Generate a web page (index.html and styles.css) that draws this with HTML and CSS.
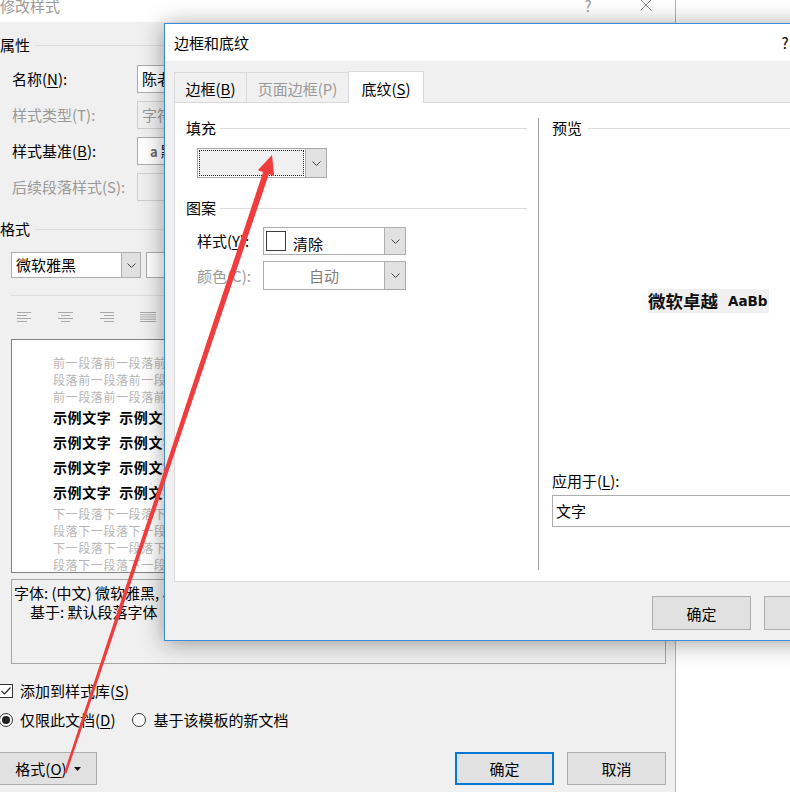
FILE: index.html
```html
<!DOCTYPE html>
<html lang="zh-CN">
<head>
<meta charset="utf-8">
<title>边框和底纹</title>
<link rel="stylesheet" href="styles.css">
</head>
<body>
<div class="screen">
  <div class="back">
    <div class="back-title">
      <span class="back-title-text">修改样式</span>
      <span class="cap-btn help">?</span>
      <span class="cap-btn close"><svg width="12" height="12" viewBox="0 0 12 12"><path d="M0.5 0.5 L11.5 11.5 M11.5 0.5 L0.5 11.5" stroke="#8a8a8a" stroke-width="1" fill="none"/></svg></span>
    </div>
    <div class="sec sec-attr"><span>属性</span><i class="rule"></i></div>
    <div class="prop-rows">
      <div class="prop-row"><span class="prop-label">名称(<u>N</u>):</span><span class="field">陈老师标题样式</span></div>
      <div class="prop-row"><span class="prop-label dis">样式类型(T):</span><span class="field field-dis">字符</span></div>
      <div class="prop-row"><span class="prop-label">样式基准(<u>B</u>):</span><span class="field"><b class="char-ico">a</b>默认段落字体</span></div>
      <div class="prop-row"><span class="prop-label dis">后续段落样式(S):</span><span class="field field-dis"></span></div>
    </div>
    <div class="sec sec-format"><span>格式</span><i class="rule"></i></div>
    <div class="font-row">
      <div class="select font-select"><span class="select-text">微软雅黑</span><span class="drop-btn"><svg width="9" height="5" viewBox="0 0 9 5"><path d="M0.5 0.5 L4.5 4.5 L8.5 0.5" fill="none" stroke="#444" stroke-width="1"/></svg></span></div>
      <div class="select size-select"></div>
    </div>
    <div class="hr"></div>
    <div class="align-row">
      <svg width="15" height="10" viewBox="0 0 15 10"><path d="M0 0.5H14 M0 3.5H10 M0 6.5H14 M0 9.5H10" stroke="#a8a8a8" stroke-width="1"/></svg>
      <svg width="15" height="10" viewBox="0 0 15 10"><path d="M0 0.5H15 M3 3.5H12 M0 6.5H15 M3 9.5H12" stroke="#a8a8a8" stroke-width="1"/></svg>
      <svg width="15" height="10" viewBox="0 0 15 10"><path d="M1 0.5H15 M5 3.5H15 M1 6.5H15 M5 9.5H15" stroke="#a8a8a8" stroke-width="1"/></svg>
      <svg width="16" height="10" viewBox="0 0 16 10"><path d="M0 0.5H16 M0 2.75H16 M0 5H16 M0 7.25H16 M0 9.5H16" stroke="#a8a8a8" stroke-width="1"/></svg>
    </div>
    <div class="sample">
      <div class="s-gray">前一段落前一段落前一段落前一段落前一段落前一段落前一段落</div>
      <div class="s-gray">段落前一段落前一段落前一段落前一段落前一段落前一段落</div>
      <div class="s-gray">前一段落前一段落前一段落前一段落前一段落前一段落前一段落</div>
      <div class="s-bold">示例文字 示例文字 示例文字 示例文字 示例文字</div>
      <div class="s-bold">示例文字 示例文字 示例文字 示例文字 示例文字</div>
      <div class="s-bold">示例文字 示例文字 示例文字 示例文字 示例文字</div>
      <div class="s-bold">示例文字 示例文字 示例文字 示例文字 示例文字</div>
      <div class="s-gray">下一段落下一段落下一段落下一段落下一段落下一段落下一段落</div>
      <div class="s-gray">段落下一段落下一段落下一段落下一段落下一段落下一段落</div>
      <div class="s-gray">下一段落下一段落下一段落下一段落下一段落下一段落下一段落</div>
      <div class="s-gray">段落下一段落下一段落下一段落下一段落下一段落下一段落</div>
    </div>
    <div class="desc">
      <div>字体: (中文) 微软雅黑, 小四, 加粗</div>
      <div class="desc-indent">基于: 默认段落字体</div>
    </div>
    <div class="check-row">
      <span class="checkbox"><svg width="12" height="12" viewBox="0 0 12 12"><path d="M1.5 6 L4.5 9 L10.5 2.5" fill="none" stroke="#222" stroke-width="1.2"/></svg></span>
      <span class="opt-text">添加到样式库(<u>S</u>)</span>
    </div>
    <div class="radio-row">
      <span class="radio radio-on"><i></i></span>
      <span class="opt-text">仅限此文档(<u>D</u>)</span>
      <span class="radio radio-second"></span>
      <span class="opt-text">基于该模板的新文档</span>
    </div>
    <div class="btn-row">
      <span class="btn btn-format">格式(<u>O</u>)<svg class="caret" width="7" height="4" viewBox="0 0 7 4"><path d="M0 0H7L3.5 4Z" fill="#111"/></svg></span>
      <span class="btn btn-default">确定</span>
      <span class="btn btn-cancel">取消</span>
    </div>
  </div>

  <div class="front">
    <div class="front-title">
      <span class="front-title-text">边框和底纹</span>
      <span class="fcap help2">?</span>
      <span class="fcap"></span>
    </div>
    <div class="tabs">
      <span class="tab tab1">边框(<u>B</u>)</span>
      <span class="tab tab2">页面边框(P)</span>
      <span class="tab tab3">底纹(<u>S</u>)</span>
    </div>
    <div class="panel">
      <div class="col-left">
        <div class="sec2"><span>填充</span><i class="rule2"></i></div>
        <div class="fill-select">
          <span class="fill-text"><i class="focus"></i></span>
          <span class="dd-btn"><svg width="9" height="5" viewBox="0 0 9 5"><path d="M0.5 0.5 L4.5 4.5 L8.5 0.5" fill="none" stroke="#444" stroke-width="1"/></svg></span>
        </div>
        <div class="sec2 sec-pattern"><span>图案</span><i class="rule2"></i></div>
        <div class="pat-row pat-row1">
          <span class="pat-label">样式(<u>Y</u>):</span>
          <span class="dd">
            <i class="swatch"></i><span class="dd-text">清除</span>
            <span class="dd-btn"><svg width="9" height="5" viewBox="0 0 9 5"><path d="M0.5 0.5 L4.5 4.5 L8.5 0.5" fill="none" stroke="#444" stroke-width="1"/></svg></span>
          </span>
        </div>
        <div class="pat-row pat-row2">
          <span class="pat-label dis">颜色(C):</span>
          <span class="dd">
            <span class="dd-center">自动</span>
            <span class="dd-btn"><svg width="9" height="5" viewBox="0 0 9 5"><path d="M0.5 0.5 L4.5 4.5 L8.5 0.5" fill="none" stroke="#444" stroke-width="1"/></svg></span>
          </span>
        </div>
      </div>
      <div class="divider"></div>
      <div class="col-right">
        <div class="sec2 sec-preview"><span>预览</span><i class="rule2"></i></div>
        <div class="pv-sample"><span class="pv-cn">微软卓越</span><span class="pv-en">AaBb</span></div>
        <div class="apply-label">应用于(<u>L</u>):</div>
        <div class="apply-input">文字</div>
      </div>
    </div>
    <div class="front-btns">
      <span class="btn fbtn">确定</span>
      <span class="btn fbtn">取消</span>
    </div>
  </div>

  <svg class="arrow" width="790" height="792" viewBox="0 0 790 792">
    <polygon points="272,155 274.2,175.9 268.9,174 66.5,773.4 64.1,772.6 263.1,172.1 257.8,170.2" fill="#f03c3c"/>
  </svg>
</div>
</body>
</html>
```

FILE: styles.css
```css
* { box-sizing: border-box; }
html, body { margin: 0; padding: 0; }
body {
  width: 790px;
  height: 792px;
  overflow: hidden;
  background: #ffffff;
  font-family: "Noto Sans CJK SC", "Noto Sans", sans-serif;
  font-size: 15px;
  color: #000;
}
u { text-decoration: underline; text-underline-offset: 2px; }
.screen { position: relative; width: 790px; height: 792px; overflow: hidden; }

/* ---------- back dialog ---------- */
.back {
  width: 676px;
  height: 792px;
  background: #f0f0f0;
  border-right: 1px solid #b4b4b4;
}
.back-title {
  height: 22px;
  background: #ffffff;
  display: flex;
  align-items: flex-start;
}
.back-title-text { line-height: 12px; color: #9a9a9a; white-space: nowrap; }
.cap-btn { width: 58px; text-align: center; line-height: 12px; color: #9a9a9a; }
.cap-btn.help { margin-left: auto; }
.cap-btn.close svg { display: block; margin: -1px auto 0; }

.sec { display: flex; align-items: center; height: 20px; line-height: 20px; }
.sec .rule { flex: 1; height: 1px; background: #dcdcdc; margin-left: 5px; margin-right: 15px; }
.sec-attr { margin-top: 13px; }
.sec-format { margin-top: 18px; }

.prop-rows { margin-top: 10px; display: flex; flex-direction: column; gap: 8px; }
.prop-row { display: flex; align-items: center; height: 28px; }
.prop-label { width: 137px; padding-left: 12px; line-height: 20px; white-space: nowrap; }
.dis { color: #999999; }
.field {
  width: 400px;
  height: 28px;
  border: 1px solid #adadad;
  background: #ffffff;
  padding-left: 4px;
  line-height: 26px;
  white-space: nowrap;
  overflow: hidden;
}
.field-dis { background: #f0f0f0; border-color: #cfcfcf; color: #999999; }
.char-ico { font-size: 13px; color: #666; margin: 0 3px 0 8px; font-weight: bold; }

.font-row { margin-top: 13px; display: flex; gap: 5px; padding-left: 11px; }
.select { height: 26px; border: 1px solid #adadad; background: #fff; display: flex; }
.font-select { width: 130px; }
.size-select { width: 60px; }
.select-text { flex: 1; padding-left: 4px; line-height: 24px; white-space: nowrap; }
.drop-btn {
  width: 19px;
  background: #e1e1e1;
  border-left: 1px solid #adadad;
  display: flex;
  align-items: center;
  justify-content: center;
}

.hr { margin-top: 17px; margin-left: 11px; width: 655px; height: 1px; background: #dcdcdc; }
.align-row { margin-top: 16px; height: 10px; display: flex; gap: 26px; padding-left: 17px; }
.align-row svg { display: block; }

.sample {
  margin-top: 17px;
  margin-left: 11px;
  width: 655px;
  height: 234px;
  border: 1px solid #828282;
  background: #ffffff;
  padding: 14px 0 0 41px;
  overflow: hidden;
}
.s-gray { font-size: 12px; line-height: 17px; letter-spacing: 0.6px; color: #b6b6b6; white-space: nowrap; }
.s-bold { font-size: 14px; line-height: 25px; letter-spacing: 0.6px; word-spacing: 4px; font-weight: bold; color: #000; white-space: nowrap; }

.desc {
  margin-top: 6px;
  margin-left: 11px;
  width: 655px;
  height: 85px;
  border: 1px solid #a5a5a5;
  background: #f0f0f0;
  padding: 3px 2px 0;
  line-height: 19px;
  white-space: nowrap;
  overflow: hidden;
}
.desc-indent { padding-left: 16px; }

.check-row, .radio-row { display: flex; align-items: center; height: 20px; }
.check-row { margin-top: 17px; }
.radio-row { margin-top: 9px; }
.checkbox {
  width: 14px;
  height: 14px;
  margin-left: -1px;
  border: 1px solid #333;
  background: #fff;
  display: flex;
  align-items: center;
  justify-content: center;
}
.opt-text { margin-left: 7px; line-height: 20px; white-space: nowrap; }
.radio {
  width: 14px;
  height: 14px;
  border: 1px solid #333;
  border-radius: 50%;
  background: #fff;
  display: flex;
  align-items: center;
  justify-content: center;
}
.radio-on { margin-left: -1px; }
.radio-on i { width: 8px; height: 8px; border-radius: 50%; background: #222; display: block; }
.radio-second { margin-left: 17px; }

.btn-row { margin-top: 22px; display: flex; height: 33px; padding-right: 9px; }
.btn {
  height: 33px;
  background: #e1e1e1;
  border: 1px solid #adadad;
  display: flex;
  align-items: center;
  justify-content: center;
  white-space: nowrap;
}
.btn-format { width: 98px; margin-left: -1px; }
.caret { margin-left: 7px; display: block; }
.btn-default { width: 99px; margin-left: auto; border: 2px solid #0078d7; }
.btn-cancel { width: 99px; margin-left: 13px; }

/* ---------- front dialog (floating window) ---------- */
.front {
  position: absolute;
  left: 164px;
  top: 23px;
  width: 709px;
  height: 618px;
  background: #f0f0f0;
  border: 1px solid #3d8ad6;
  box-shadow: 0 2px 22px rgba(0, 0, 0, 0.38);
}
.front-title { height: 37px; background: #fff; display: flex; align-items: center; }
.front-title-text { margin-left: 9px; line-height: 20px; white-space: nowrap; }
.fcap { width: 58px; text-align: center; line-height: 20px; }
.help2 { margin-left: auto; }

.tabs {
  position: relative;
  z-index: 2;
  margin-top: 11px;
  padding-left: 9px;
  display: flex;
  align-items: flex-end;
  height: 30px;
}
.tab {
  height: 30px;
  border: 1px solid #d9d9d9;
  border-bottom: 0;
  background: #f0f0f0;
  text-align: center;
  padding-top: 3px;
  line-height: 26px;
  white-space: nowrap;
}
.tab1 { width: 73px; }
.tab2 { width: 103px; margin-left: -1px; color: #999; }
.tab3 { width: 76px; margin-left: -1px; height: 32px; margin-bottom: -1px; padding-top: 4px; background: #fff; }

.panel {
  position: relative;
  z-index: 1;
  margin: 0 9px;
  height: 480px;
  border: 1px solid #d9d9d9;
  background: #fff;
  display: grid;
  grid-template-columns: 363px 1px 1fr;
  align-items: start;
}
.col-left { padding: 15px 11px 0 11px; }
.col-right { padding: 15px 11px 0 13px; }
.divider { margin-top: 15px; height: 452px; background: #a0a0a0; }

.sec2 { display: flex; align-items: center; height: 20px; line-height: 20px; }
.rule2 { flex: 1; height: 1px; background: #dcdcdc; margin-left: 4px; }
.sec-preview .rule2 { margin-left: 6px; }
.sec-pattern { margin-top: 20px; }

.fill-select {
  margin-top: 10px;
  margin-left: 11px;
  width: 130px;
  height: 30px;
  border: 1px solid #a8a8a8;
  background: #fff;
  display: flex;
}
.fill-text { flex: 1; padding: 1px; display: flex; }
.focus { flex: 1; border: 1px dotted #222; background: #f0f0f0; display: block; }
.dd-btn {
  width: 21px;
  height: 100%;
  background: #e1e1e1;
  border-left: 1px solid #adadad;
  display: flex;
  align-items: center;
  justify-content: center;
  margin-left: auto;
}

.pat-row { display: flex; align-items: center; }
.pat-row1 { margin-top: 9px; height: 28px; }
.pat-row2 { margin-top: 6px; height: 29px; }
.pat-label { width: 77px; padding-left: 11px; line-height: 20px; white-space: nowrap; }
.dd {
  width: 143px;
  height: 100%;
  border: 1px solid #adadad;
  background: #fff;
  display: flex;
  align-items: center;
}
.swatch { width: 20px; height: 20px; margin-left: 2px; border: 1px solid #3c3c3c; display: block; }
.dd-text { margin-left: 7px; padding-top: 5px; line-height: 20px; }
.dd-center { flex: 1; text-align: center; color: #808080; line-height: 20px; }

.pv-sample {
  margin-top: 151px;
  margin-left: 96px;
  width: fit-content;
  height: 24px;
  background: #f0f0f0;
  display: flex;
  align-items: center;
  padding-right: 1px;
}
.pv-cn { font-size: 17.5px; font-weight: bold; line-height: 24px; color: #111; white-space: nowrap; }
.pv-en { font-family: "DejaVu Sans", sans-serif; font-size: 13.5px; font-weight: bold; margin-left: 10px; line-height: 24px; color: #111; }

.apply-label { margin-top: 158px; line-height: 20px; }
.apply-input {
  margin-top: 4px;
  height: 32px;
  border: 1px solid #adadad;
  background: #fff;
  padding-left: 3px;
  line-height: 30px;
}

.front-btns { margin-top: 14px; display: flex; justify-content: flex-end; gap: 13px; padding-right: 9px; }
.fbtn { width: 99px; height: 34px; }

/* ---------- annotation arrow ---------- */
.arrow { position: absolute; left: 0; top: 0; z-index: 10; pointer-events: none; }
```
